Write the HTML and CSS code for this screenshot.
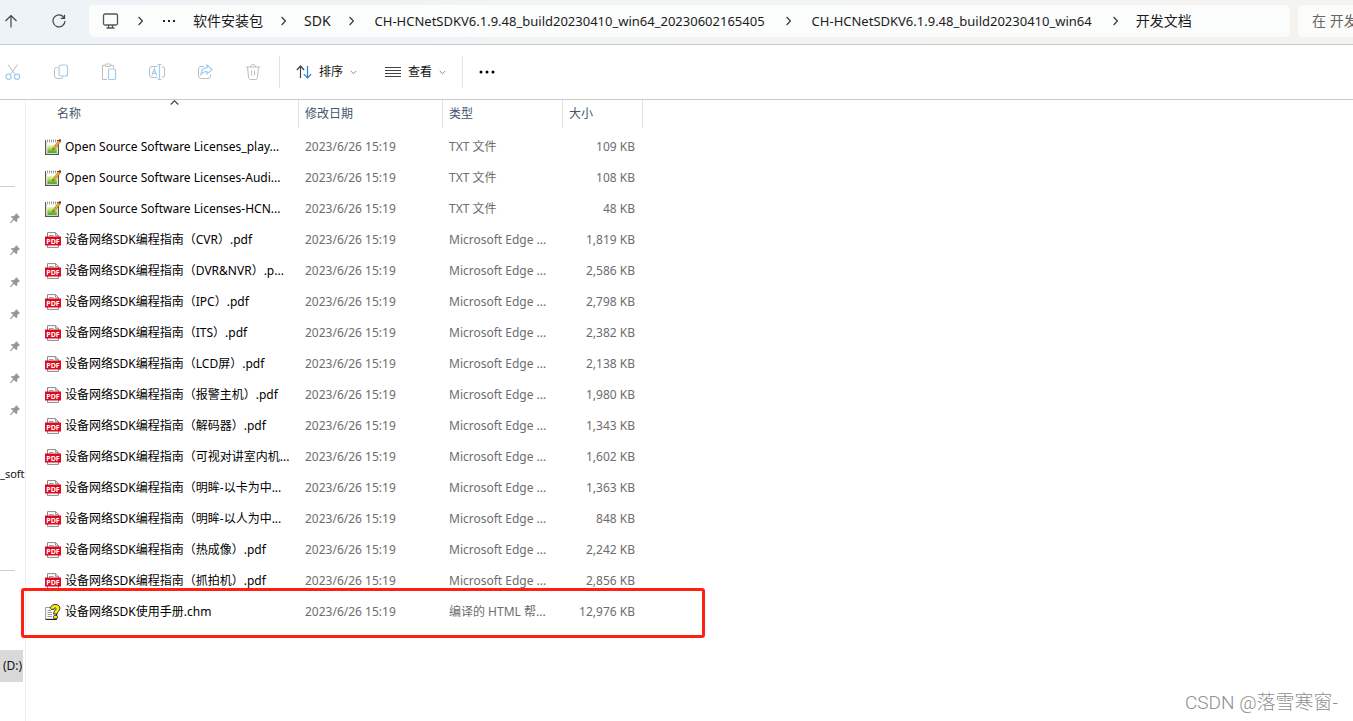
FILE: index.html
```html
<!DOCTYPE html>
<html lang="zh-CN">
<head>
<meta charset="utf-8">
<title>开发文档</title>
<link rel="stylesheet" href="styles.css">
</head>
<body>
<svg class="sprite" aria-hidden="true">
  <defs>
    <linearGradient id="page-green" x1="0" y1="0" x2="0" y2="1">
      <stop offset="0" stop-color="#f4fbdc"/><stop offset=".45" stop-color="#b4dd62"/><stop offset="1" stop-color="#3f9d1c"/>
    </linearGradient>
  </defs>
  <symbol id="i-chevron" viewBox="0 0 5 10"><path d="M.6 1 4.4 5 .6 9" fill="none" stroke="#333" stroke-width="1.1"/></symbol>
  <symbol id="i-down" viewBox="0 0 7 5"><path d="M.7.9 3.5 3.7 6.3.9" fill="none" stroke="#8a8a8a"/></symbol>
  <symbol id="i-pin" viewBox="0 0 12 12"><path d="M7 1 11.200 5.200 9.900 5.500 8.300 7.300 8 9.800 7.300 10.300 5 8 1.700 11.300 1 11 1 10.400 4.200 7.100 1.900 4.900 2.500 4.200 5 3.900 6.600 2.300Z" fill="#8e99a3"/></symbol>
  <symbol id="i-txt" viewBox="0 0 16 16">
    <path d="M.6 1.500H13.400V15.400H.6Z" fill="#fff" stroke="#555" stroke-width="1.200"/>
    <path d="M2.300 5.500H11.800V13.900H2.300Z" fill="url(#page-green)"/>
    <path d="M1.500.5v2.500M3.500.5v2.500M5.500.5v2.500M7.500.5v2.500M9.500.5v2.500M11.500.5v2.500" stroke="#fff"/>
    <path d="M2.500.5v3M4.500.5v3M6.500.5v3M8.500.5v3M10.500.5v3" stroke="#999" stroke-width=".8"/>
    <path d="M7.600 10.900 8.500 8.300 13.600 1.500 15.400 2.800 10.200 9.500Z" fill="#f3ae2a" stroke="#9b6714" stroke-width=".6"/>
    <path d="M13.400 1.500 14.300.3 16 .5 15.800 2.300 15.200 3Z" fill="#8c1717"/>
    <path d="M7.500 11 8 9.300 8.900 10Z" fill="#222"/>
  </symbol>
  <symbol id="i-pdf" viewBox="0 0 16 16">
    <path d="M2.500 5V.6H10.500L13.500 3.600V5M2.500 13V15.400H13.500V13" fill="#fff" stroke="#888"/>
    <path d="M10.500.6V3.600H13.500M4 3.500H8.500" fill="none" stroke="#999"/>
    <path d="M0 4.500H16V13.500H0Z" fill="#dc0920"/>
    <text x="8" y="11.500" text-anchor="middle" class="pdf-label">PDF</text>
  </symbol>
  <symbol id="i-chm" viewBox="0 0 16 16">
    <path d="M.6 3.500H8L11.500 7V15.400H.6Z" fill="#fff" stroke="#999"/>
    <path d="M.6 15.400H11.500V7" fill="none" stroke="#111"/>
    <path d="M2.500 6.500H6M2.500 8.500H7M2.500 10.500H7M2.500 12.500H7" stroke="#999"/>
    <path d="M5.400 4.500C5.400-.6 14.800-1 14.900 4.200 14.900 7 12 7.500 12.200 10H8.600C8.500 7 11.200 6.300 11 4.500 10.700 3.100 9.200 3.300 9 5.300H6Z" fill="#ffee08" stroke="#222" stroke-width=".9"/>
    <rect x="8.600" y="11.400" width="3.800" height="3.400" rx="1" fill="#ffee08" stroke="#222" stroke-width=".9"/>
  </symbol>
</svg>

<header class="navbar">
  <button class="nav-button nav-up" aria-label="向上"><svg width="14" height="14" viewBox="0 0 14 14"><path d="M7 13.500V1.500M1.500 7 7 1.500 12.500 7" class="ink"/></svg></button>
  <button class="nav-button" aria-label="刷新"><svg width="14" height="14" viewBox="0 0 14 14"><path d="M12 3.600A6 6 0 1 0 13 7M12.500.7V4.300H8.700" class="ink"/></svg></button>
  <nav class="address" aria-label="路径">
    <svg class="monitor" width="18" height="16" viewBox="0 0 18 16"><rect x="1.500" y="1" width="14" height="11" rx="1.500" class="device"/><path d="M6.500 12V15M10.500 12V15M4.500 15H12.500" class="device"/></svg>
    <svg class="chevron"><use href="#i-chevron"/></svg>
    <button class="more-path" aria-label="更多"><svg width="14" height="4" viewBox="0 0 14 4"><path d="M2 1h2v2H2zM7 1h2v2H7zM12 1h2v2h-2z" fill="#222"/></svg></button>
    <a class="crumb" href="#">软件安装包</a>
    <svg class="chevron"><use href="#i-chevron"/></svg>
    <a class="crumb" href="#">SDK</a>
    <svg class="chevron"><use href="#i-chevron"/></svg>
    <a class="crumb crumb-long" href="#">CH-HCNetSDKV6.1.9.48_build20230410_win64_20230602165405</a>
    <svg class="chevron"><use href="#i-chevron"/></svg>
    <a class="crumb crumb-long" href="#">CH-HCNetSDKV6.1.9.48_build20230410_win64</a>
    <svg class="chevron"><use href="#i-chevron"/></svg>
    <a class="crumb" href="#">开发文档</a>
  </nav>
  <input class="search" type="text" aria-label="搜索" placeholder="在 开发">
</header>

<div class="toolbar" role="toolbar">
  <div class="tools">
    <button class="tool" aria-label="剪切"><svg width="16" height="18" viewBox="0 0 16 18"><path d="M3 1.500 10.500 12M12.500 1.500 5 12" class="grey"/><circle cx="3.500" cy="13.700" r="2.600" class="blue"/><circle cx="12" cy="13.700" r="2.600" class="blue"/></svg></button>
    <button class="tool" aria-label="复制"><svg width="16" height="18" viewBox="0 0 16 18"><path d="M4.500 4.500H3.500A2 2 0 0 0 1.500 6.500V13A2.500 2.500 0 0 0 4 15.500H8A2 2 0 0 0 10 13.500" class="grey"/><rect x="6" y="2" width="8.500" height="11" rx="2" class="blue"/></svg></button>
    <button class="tool" aria-label="粘贴"><svg width="16" height="18" viewBox="0 0 16 18"><path d="M4.500 2.500H1.500V16.500H6M9.500 2.500H12.500V5" class="grey"/><rect x="4" y="1" width="6" height="2.500" rx="1.200" class="grey"/><rect x="7.500" y="6" width="7" height="10.500" rx="1" class="blue"/></svg></button>
    <button class="tool" aria-label="重命名"><svg width="18" height="18" viewBox="0 0 18 18"><path d="M9.500 3.500H4A2.500 2.500 0 0 0 1.500 6V12A2.500 2.500 0 0 0 4 14.500H9.500M14 3.500A2.500 2.500 0 0 1 16.500 6V12A2.500 2.500 0 0 1 14 14.500" class="grey"/><path d="M11.500 1.500V16.500M9.500 1.500H13.500M9.500 16.500H13.500M3.800 12.500 6.300 6 8.800 12.500M4.700 10.300H7.900" class="blue"/></svg></button>
    <button class="tool" aria-label="共享"><svg width="16" height="18" viewBox="0 0 16 18"><path d="M7 3.500H4A2.500 2.500 0 0 0 1.500 6V13A2.500 2.500 0 0 0 4 15.500H11A2.500 2.500 0 0 0 13.500 13V11.500" class="grey"/><path d="M10 2 15 6.500 10 11V8.500C7 8.300 5.500 9.500 4 11.500 4.200 7.500 6.500 5 10 4.700Z" class="blue"/></svg></button>
    <button class="tool" aria-label="删除"><svg width="16" height="18" viewBox="0 0 16 18"><path d="M1 4H15M5.500 4C5.500.8 10.500.8 10.500 4M2.500 4 3.600 14.500Q3.800 16.500 5.500 16.500H10.500Q12.200 16.500 12.400 14.500L13.500 4M6.500 7.500V12.500M9.500 7.500V12.500" class="grey"/></svg></button>
  </div>
  <div class="menus">
    <button class="menu"><svg width="16" height="16" viewBox="0 0 16 16"><path d="M4.500 14V2M.8 6 4.500 2 8.200 6" class="ink"/><path d="M11.500 2V14M7.800 10.200 11.500 14 15.200 10.200" class="accent"/></svg>排序<svg class="down"><use href="#i-down"/></svg></button>
    <button class="menu"><svg width="16" height="16" viewBox="0 0 16 16"><path d="M0 3.500H16M0 6.500H16M0 9.500H16M0 12.500H16" class="line"/></svg>查看<svg class="down"><use href="#i-down"/></svg></button>
  </div>
  <button class="overflow" aria-label="查看更多"><svg width="16" height="4" viewBox="0 0 16 4"><circle cx="2" cy="2" r="1.500"/><circle cx="8" cy="2" r="1.500"/><circle cx="14" cy="2" r="1.500"/></svg></button>
</div>

<main class="explorer">
  <aside class="sidebar">
    <hr class="divider">
    <div class="pins">
      <svg class="pin"><use href="#i-pin"/></svg>
      <svg class="pin"><use href="#i-pin"/></svg>
      <svg class="pin"><use href="#i-pin"/></svg>
      <svg class="pin"><use href="#i-pin"/></svg>
      <svg class="pin"><use href="#i-pin"/></svg>
      <svg class="pin"><use href="#i-pin"/></svg>
      <svg class="pin"><use href="#i-pin"/></svg>
    </div>
    <div class="folder">_soft</div>
    <hr class="divider">
    <div class="drive">(D:)</div>
  </aside>
  <section class="files">
    <table class="list">
      <colgroup><col class="c-name"><col class="c-date"><col class="c-type"><col class="c-size"></colgroup>
      <thead>
        <tr><th class="sorted">名称<svg class="sort" width="9" height="5" viewBox="0 0 9 5"><path d="M.7 4.500 4.500.8 8.300 4.500" class="ink"/></svg></th><th>修改日期</th><th>类型</th><th>大小</th></tr>
      </thead>
      <tbody>
        <tr><td><svg class="icon"><use href="#i-txt"/></svg>Open Source Software Licenses_play...</td><td>2023/6/26 15:19</td><td>TXT 文件</td><td>109 KB</td></tr>
        <tr><td><svg class="icon"><use href="#i-txt"/></svg>Open Source Software Licenses-Audi...</td><td>2023/6/26 15:19</td><td>TXT 文件</td><td>108 KB</td></tr>
        <tr><td><svg class="icon"><use href="#i-txt"/></svg>Open Source Software Licenses-HCN...</td><td>2023/6/26 15:19</td><td>TXT 文件</td><td>48 KB</td></tr>
        <tr><td><svg class="icon"><use href="#i-pdf"/></svg>设备网络SDK编程指南（CVR）.pdf</td><td>2023/6/26 15:19</td><td>Microsoft Edge ...</td><td>1,819 KB</td></tr>
        <tr><td><svg class="icon"><use href="#i-pdf"/></svg>设备网络SDK编程指南（DVR&amp;NVR）.p...</td><td>2023/6/26 15:19</td><td>Microsoft Edge ...</td><td>2,586 KB</td></tr>
        <tr><td><svg class="icon"><use href="#i-pdf"/></svg>设备网络SDK编程指南（IPC）.pdf</td><td>2023/6/26 15:19</td><td>Microsoft Edge ...</td><td>2,798 KB</td></tr>
        <tr><td><svg class="icon"><use href="#i-pdf"/></svg>设备网络SDK编程指南（ITS）.pdf</td><td>2023/6/26 15:19</td><td>Microsoft Edge ...</td><td>2,382 KB</td></tr>
        <tr><td><svg class="icon"><use href="#i-pdf"/></svg>设备网络SDK编程指南（LCD屏）.pdf</td><td>2023/6/26 15:19</td><td>Microsoft Edge ...</td><td>2,138 KB</td></tr>
        <tr><td><svg class="icon"><use href="#i-pdf"/></svg>设备网络SDK编程指南（报警主机）.pdf</td><td>2023/6/26 15:19</td><td>Microsoft Edge ...</td><td>1,980 KB</td></tr>
        <tr><td><svg class="icon"><use href="#i-pdf"/></svg>设备网络SDK编程指南（解码器）.pdf</td><td>2023/6/26 15:19</td><td>Microsoft Edge ...</td><td>1,343 KB</td></tr>
        <tr><td><svg class="icon"><use href="#i-pdf"/></svg>设备网络SDK编程指南（可视对讲室内机...</td><td>2023/6/26 15:19</td><td>Microsoft Edge ...</td><td>1,602 KB</td></tr>
        <tr><td><svg class="icon"><use href="#i-pdf"/></svg>设备网络SDK编程指南（明眸-以卡为中...</td><td>2023/6/26 15:19</td><td>Microsoft Edge ...</td><td>1,363 KB</td></tr>
        <tr><td><svg class="icon"><use href="#i-pdf"/></svg>设备网络SDK编程指南（明眸-以人为中...</td><td>2023/6/26 15:19</td><td>Microsoft Edge ...</td><td>848 KB</td></tr>
        <tr><td><svg class="icon"><use href="#i-pdf"/></svg>设备网络SDK编程指南（热成像）.pdf</td><td>2023/6/26 15:19</td><td>Microsoft Edge ...</td><td>2,242 KB</td></tr>
        <tr><td><svg class="icon"><use href="#i-pdf"/></svg>设备网络SDK编程指南（抓拍机）.pdf</td><td>2023/6/26 15:19</td><td>Microsoft Edge ...</td><td>2,856 KB</td></tr>
        <tr><td><svg class="icon"><use href="#i-chm"/></svg>设备网络SDK使用手册.chm</td><td>2023/6/26 15:19</td><td>编译的 HTML 帮...</td><td>12,976 KB</td></tr>
      </tbody>
    </table>
    <div class="highlight"></div>
  </section>
  <div class="watermark">CSDN @落雪寒窗-</div>
</main>
</body>
</html>
```
FILE: styles.css
```css
* { box-sizing: border-box; }

body {
  margin: 0;
  min-height: 100vh;
  display: flex;
  flex-direction: column;
  overflow: hidden;
  background: #fff;
  color: #111;
  font: 12px/16px "Noto Sans", "Noto Sans CJK SC", sans-serif;
}

button {
  display: flex;
  align-items: center;
  justify-content: center;
  padding: 0;
  border: 0;
  background: none;
  color: inherit;
  font: inherit;
}

svg { display: block; flex: none; }
.sprite { position: absolute; width: 0; height: 0; }
.pdf-label { font: bold 7px "Open Sans", sans-serif; fill: #fff; }

.ink, .device, .grey, .blue, .accent, .line { fill: none; stroke-width: 1; }
.ink { stroke: #444; stroke-width: 1.2; }
.device { stroke: #555; stroke-width: 1.3; }
.grey { stroke: #bdbdbd; }
.blue { stroke: #9fcdf0; stroke-width: 1.2; }
.accent { stroke: #1b7fd6; stroke-width: 1.2; }
.line { stroke: #444; }

/* Navigation bar */
.navbar {
  display: flex;
  align-items: center;
  height: 45px;
  padding-bottom: 3px;
  background: linear-gradient(90deg, #edf3f7, #f1f3f5 40%, #f5f3ef);
  border-bottom: 1px solid;
  border-image: linear-gradient(90deg, #bccdd3, #c9c9c6 40%, #cfcbb9) 1;
}
.nav-button { width: 48px; height: 32px; margin-right: 6px; }
.nav-button.nav-up { width: 22px; margin-right: 13px; }
.address {
  flex: 1;
  min-width: 0;
  display: flex;
  align-items: center;
  gap: 18px;
  height: 32px;
  padding-left: 13px;
  overflow: hidden;
  border-radius: 5px;
  background: #fbfcfc;
}
.chevron { width: 5px; height: 10px; }
.crumb {
  color: #1b1b1b;
  font-size: 14px;
  line-height: 20px;
  text-decoration: none;
  white-space: nowrap;
}
.crumb-long { padding: 0 3px; font-size: 13px; }
.search {
  width: 55px;
  height: 32px;
  margin-left: 8px;
  padding: 0 0 0 14px;
  border: 0;
  border-radius: 5px 0 0 5px;
  background: #fcfcfb;
  font: 14px/20px "Noto Sans", "Noto Sans CJK SC", sans-serif;
}
.search::placeholder { color: #666; opacity: 1; }

/* Command bar */
.toolbar {
  display: flex;
  align-items: center;
  height: 55px;
  border-bottom: 1px solid;
  border-image: linear-gradient(90deg, #c3cfd3, #cacac8 40%, #cfcbb9) 1;
}
.tools { display: flex; width: 280px; height: 32px; border-right: 1px solid #e5e5e5; }
.tool { width: 48px; }
.tool:first-child { width: 26px; margin-right: 11px; }
.menus {
  display: flex;
  gap: 28px;
  width: 183px;
  height: 32px;
  padding-left: 16px;
  border-right: 1px solid #e5e5e5;
}
.menu { gap: 7px; }
.down { width: 7px; height: 5px; }
.overflow { width: 48px; height: 32px; }

/* Explorer body */
.explorer { position: relative; flex: 1; display: flex; }
.sidebar {
  width: 26px;
  padding-top: 86px;
  overflow: hidden;
  border-right: 1px solid #f0f0f0;
}
.divider { width: 15px; height: 1px; margin: 0; border: 0; background: #d0d0d0; }
.pins { display: grid; gap: 20px; padding: 25px 0 42px 9px; }
.pin { width: 12px; height: 12px; }
.folder { height: 32px; margin-bottom: 80px; font-size: 11px; line-height: 32px; }
.drive { width: 23px; height: 32px; margin-top: 79px; padding-left: 3px; line-height: 32px; overflow: hidden; background: #d9d9d9; }

.files { position: relative; align-self: flex-start; padding-left: 11px; }
.list { width: 606px; table-layout: fixed; border-collapse: separate; border-spacing: 0; }
.c-name { width: 262px; }
.c-date { width: 144px; }
.c-type { width: 120px; }
.c-size { width: 80px; }
.list th {
  position: relative;
  height: 28px;
  padding: 0 0 0 6px;
  border-right: 1px solid #e2e2e2;
  color: #44566f;
  font-weight: 400;
  text-align: left;
}
.list th:first-child { padding-left: 20px; }
.sort { position: absolute; top: 0; left: 133px; }
.list tbody::before { content: ""; display: block; height: 3px; }
.list td { height: 31px; padding: 0 0 0 6px; color: #6d6d6d; white-space: nowrap; }
.list td:first-child { padding-left: 8px; color: #000; }
.list td:last-child { padding: 0 8px 0 0; text-align: right; }
.icon { display: inline-block; width: 16px; height: 16px; margin-right: 4px; vertical-align: -4px; }

.highlight {
  position: absolute;
  left: -5px;
  bottom: -11px;
  width: 684px;
  height: 50px;
  border: 3px solid #ff2014;
  border-radius: 3px;
}
.watermark {
  position: absolute;
  right: 15px;
  bottom: 6px;
  color: #8f8f8f;
  font: 300 19px/24px Roboto, "Noto Sans CJK SC", sans-serif;
}
```
